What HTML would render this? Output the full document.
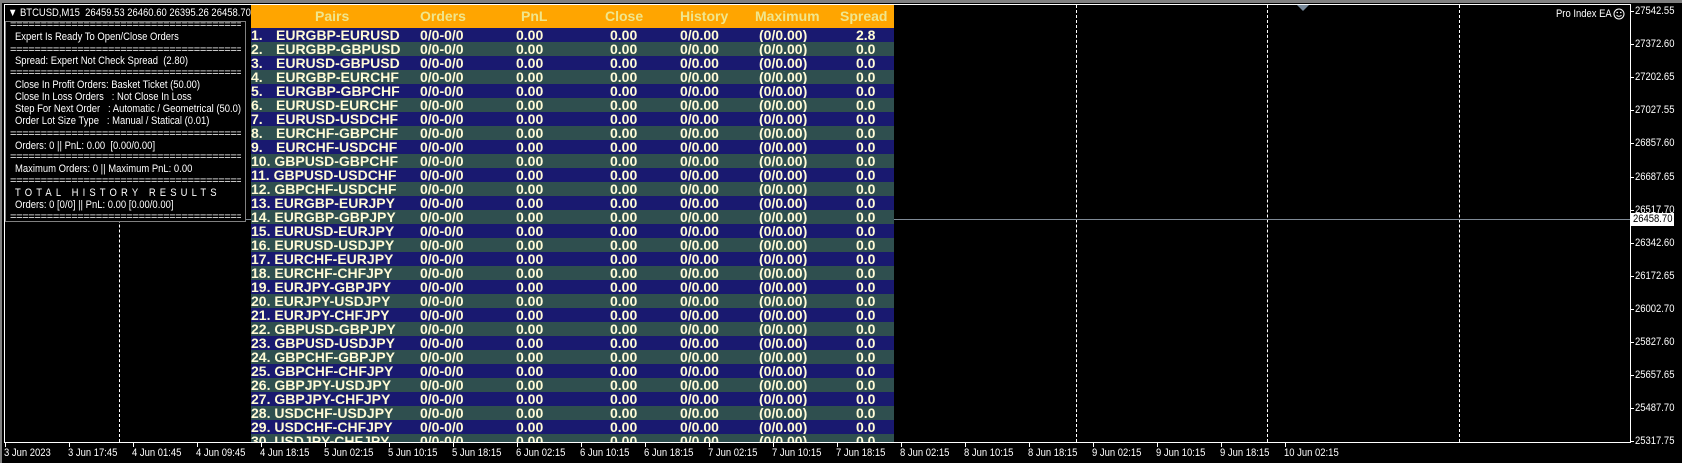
<!DOCTYPE html>
<html><head><meta charset="utf-8"><style>
*{margin:0;padding:0;box-sizing:border-box}
body{width:1682px;height:465px;background:#000;position:relative;overflow:hidden;font-family:"Liberation Sans",Tahoma,sans-serif;color:#fff}
.a{position:absolute;white-space:pre}
.s{font-size:11px;line-height:12px;transform:scaleX(.86);transform-origin:0 0}
.sep{position:absolute;left:10px;width:231px;height:12px;overflow:hidden;font-size:11px;line-height:12px;white-space:pre;letter-spacing:-0.3px}
.dash{position:absolute;top:5px;height:437px;width:0;border-left:1px dashed #fff}
.row{position:absolute;left:251px;width:643px;height:14px;font:bold 14px/14px "Liberation Sans",Arial,sans-serif;color:#fffbd6}
.row span{position:absolute;top:0;white-space:pre}
.hd{position:absolute;top:5px;font:bold 14px/23px "Liberation Sans",Arial,sans-serif;color:#f0e68c;white-space:pre}
.pl{position:absolute;left:1635px;font-size:11px;line-height:12px;color:#fff;transform:scaleX(.86);transform-origin:0 0}
.tk{position:absolute;width:4px;height:1px;background:#fff;left:1630px}
.tl{position:absolute;top:447px;font-size:11px;line-height:12px;color:#fff;white-space:pre;transform:scaleX(.86);transform-origin:0 0}
.tt{position:absolute;top:442px;width:1px;height:5px;background:#fff}
</style></head><body>
<div class="a" style="left:0;top:0;width:1682px;height:3px;background:#808080"></div>
<div class="a" style="left:0;top:0;width:2px;height:465px;background:#808080"></div>
<div class="a" style="left:0;top:463px;width:1682px;height:2px;background:#fff"></div>
<div class="a" style="left:4px;top:4px;width:1627px;height:439px;border:1px solid #fff"></div>
<div class="dash" style="left:119px"></div>
<div class="dash" style="left:1076px"></div>
<div class="dash" style="left:1267px"></div>
<div class="dash" style="left:1459px"></div>
<div class="a" style="left:1297px;top:5px;width:0;height:0;border-left:6px solid transparent;border-right:6px solid transparent;border-top:6px solid #778899"></div>
<div class="a" style="left:5px;top:219px;width:1625px;height:1px;background:#7f8a96"></div>
<div class="a" style="left:5px;top:5px;width:246px;height:16px;background:#000"></div>
<div class="a s" style="left:8px;top:7px">▼ BTCUSD,M15  26459.53 26460.60 26395.26 26458.70</div>
<div class="a" style="left:5px;top:21px;width:241px;height:201px;border:1px solid #808080;background:#000"></div>
<div class="sep" style="top:19px">==================================================</div>
<div class="a s" style="left:15px;top:31px">Expert Is Ready To Open/Close Orders</div>
<div class="sep" style="top:44px">==================================================</div>
<div class="a s" style="left:15px;top:55px">Spread: Expert Not Check Spread  (2.80)</div>
<div class="sep" style="top:67px">==================================================</div>
<div class="a s" style="left:15px;top:79px">Close In Profit Orders: Basket Ticket (50.00)</div>
<div class="a s" style="left:15px;top:91px">Close In Loss Orders   : Not Close In Loss</div>
<div class="a s" style="left:15px;top:103px">Step For Next Order   : Automatic / Geometrical (50.0)</div>
<div class="a s" style="left:15px;top:115px">Order Lot Size Type   : Manual / Statical (0.01)</div>
<div class="sep" style="top:128px">==================================================</div>
<div class="a s" style="left:15px;top:140px">Orders: 0 || PnL: 0.00  [0.00/0.00]</div>
<div class="sep" style="top:151px">==================================================</div>
<div class="a s" style="left:15px;top:163px">Maximum Orders: 0 || Maximum PnL: 0.00</div>
<div class="sep" style="top:175px">==================================================</div>
<div class="a s" style="left:15px;top:187px;letter-spacing:4.8px">TOTAL HISTORY RESULTS</div>
<div class="a s" style="left:15px;top:199px">Orders: 0 [0/0] || PnL: 0.00 [0.00/0.00]</div>
<div class="sep" style="top:211px">==================================================</div>
<div class="a" style="left:251px;top:5px;width:643px;height:23px;background:#ffa500"></div>
<div class="hd" style="left:315px">Pairs</div>
<div class="hd" style="left:420px">Orders</div>
<div class="hd" style="left:521px">PnL</div>
<div class="hd" style="left:605px">Close</div>
<div class="hd" style="left:680px">History</div>
<div class="hd" style="left:755px">Maximum</div>
<div class="hd" style="left:840px">Spread</div>
<div id="rows"></div>
<script>
var p=["EURGBP-EURUSD","EURGBP-GBPUSD","EURUSD-GBPUSD","EURGBP-EURCHF","EURGBP-GBPCHF","EURUSD-EURCHF","EURUSD-USDCHF","EURCHF-GBPCHF","EURCHF-USDCHF","GBPUSD-GBPCHF","GBPUSD-USDCHF","GBPCHF-USDCHF","EURGBP-EURJPY","EURGBP-GBPJPY","EURUSD-EURJPY","EURUSD-USDJPY","EURCHF-EURJPY","EURCHF-CHFJPY","EURJPY-GBPJPY","EURJPY-USDJPY","EURJPY-CHFJPY","GBPUSD-GBPJPY","GBPUSD-USDJPY","GBPCHF-GBPJPY","GBPCHF-CHFJPY","GBPJPY-USDJPY","GBPJPY-CHFJPY","USDCHF-USDJPY","USDCHF-CHFJPY","USDJPY-CHFJPY"];
var h="";
for(var i=0;i<30;i++){var t=28+i*14;if(t>=442)break;var hh=Math.min(14,442-t);
var lab=(i+1)+".";var nm=i<9?'<span style="left:0">'+lab+'</span><span style="left:25px">'+p[i]+'</span>':'<span style="left:0">'+lab+' '+p[i]+'</span>';
h+='<div class="row" style="top:'+t+'px;height:'+hh+'px;overflow:hidden;background:'+(i%2?'#2f4f4f':'#191970')+'">'+nm+
'<span style="left:169px">0/0-0/0</span><span style="left:265px">0.00</span><span style="left:359px">0.00</span><span style="left:429px">0/0.00</span><span style="left:508px">(0/0.00)</span><span style="left:605px">'+(i==0?'2.8':'0.0')+'</span></div>';}
document.getElementById('rows').innerHTML=h;
var pr=["27542.55","27372.60","27202.65","27027.55","26857.60","26687.65","26517.70","26342.60","26172.65","26002.70","25827.60","25657.65","25487.70","25317.75"];
var g="";for(var j=0;j<pr.length;j++){var y=5+j*33.1;g+='<div class="pl" style="top:'+y+'px">'+pr[j]+'</div><div class="tk" style="top:'+(y+6)+'px"></div>';}
var tl=["3 Jun 2023","3 Jun 17:45","4 Jun 01:45","4 Jun 09:45","4 Jun 18:15","5 Jun 02:15","5 Jun 10:15","5 Jun 18:15","6 Jun 02:15","6 Jun 10:15","6 Jun 18:15","7 Jun 02:15","7 Jun 10:15","7 Jun 18:15","8 Jun 02:15","8 Jun 10:15","8 Jun 18:15","9 Jun 02:15","9 Jun 10:15","9 Jun 18:15","10 Jun 02:15"];
for(var k=0;k<tl.length;k++){var x=4+k*64;g+='<div class="tt" style="left:'+(x+1)+'px"></div><div class="tl" style="left:'+x+'px">'+tl[k]+'</div>';}
document.body.insertAdjacentHTML('beforeend',g);
</script>
<div class="a" style="left:1631px;top:213px;width:43px;height:13px;background:#fff"></div>
<div class="a" style="left:1633px;top:213px;color:#000;font-size:11px;line-height:13px;transform:scaleX(.86);transform-origin:0 0">26458.70</div>
<div class="a s" style="left:1556px;top:8px">Pro Index EA</div>
<svg class="a" style="left:1613px;top:8px" width="12" height="12" viewBox="0 0 12 12"><circle cx="6" cy="6" r="5" fill="none" stroke="#fff" stroke-width="1"/><circle cx="4.2" cy="4.5" r=".8" fill="#fff"/><circle cx="7.8" cy="4.5" r=".8" fill="#fff"/><path d="M3.5 7.2 Q6 9.6 8.5 7.2" fill="none" stroke="#fff"/></svg>
</body></html>
